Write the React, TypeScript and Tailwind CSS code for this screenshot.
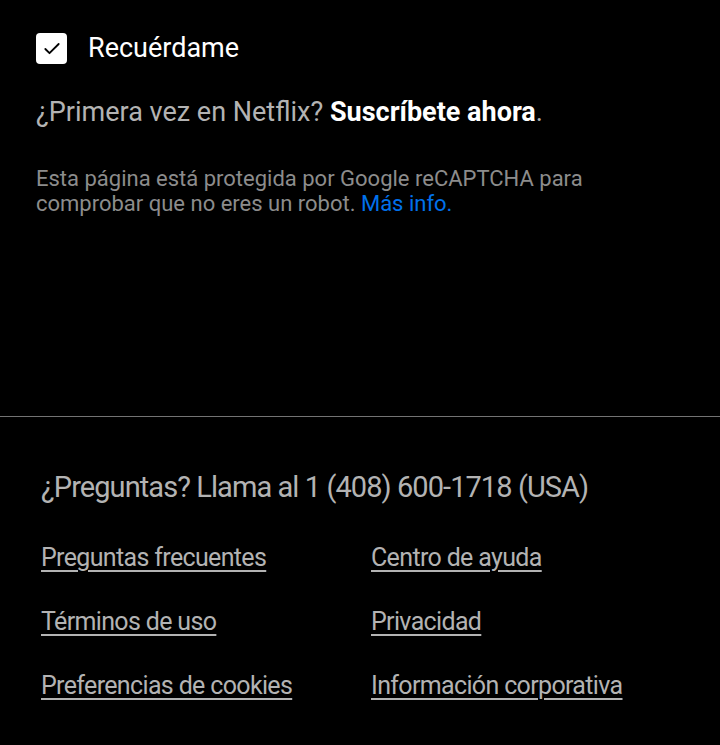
import { Check } from "lucide-react";

const links = [
  "Preguntas frecuentes",
  "Centro de ayuda",
  "Términos de uso",
  "Privacidad",
  "Preferencias de cookies",
  "Información corporativa",
];

export default function App() {
  return (
    <div className="w-[720px] h-[745px] bg-black overflow-hidden font-['Roboto',sans-serif]">
      {/* Login extras */}
      <div className="pl-9 pr-9 pt-[33px] h-[416px]">
        <label className="flex items-center gap-[21px]">
          <span className="w-[31px] h-[31px] rounded-[4px] bg-white flex items-center justify-center text-black">
            <Check size={20} strokeWidth={2.2} />
          </span>
          <span className="text-[27px] leading-[30px] text-white -mt-[2px]">Recuérdame</span>
        </label>

        <p className="mt-[33px] text-[27px] leading-[30px] text-[#b3b3b3]">
          ¿Primera vez en Netflix? <span className="font-bold text-white">Suscríbete ahora</span>.
        </p>

        <p className="mt-[39px] text-[22px] leading-[25px] text-[#8c8c8c] w-[600px]">
          Esta página está protegida por Google reCAPTCHA para
          <br />
          comprobar que no eres un robot. <span className="text-[#0071eb]">Más info.</span>
        </p>
      </div>

      {/* Footer */}
      <div className="border-t border-[#737373] pl-[41px] pt-[52px] text-[#b3b3b3]">
        <p className="text-[29px] leading-[36px] tracking-[-0.032em]">
          ¿Preguntas? Llama al 1 (408) 600-1718 (USA)
        </p>
        <div className="mt-[35px] grid grid-cols-[330px_1fr] gap-y-[28px]">
          {links.map((l) => (
            <a
              key={l}
              className="w-fit text-[25px] leading-[36px] tracking-[-0.026em] underline decoration-2 underline-offset-[4px]"
            >
              {l}
            </a>
          ))}
        </div>
      </div>
    </div>
  );
}
